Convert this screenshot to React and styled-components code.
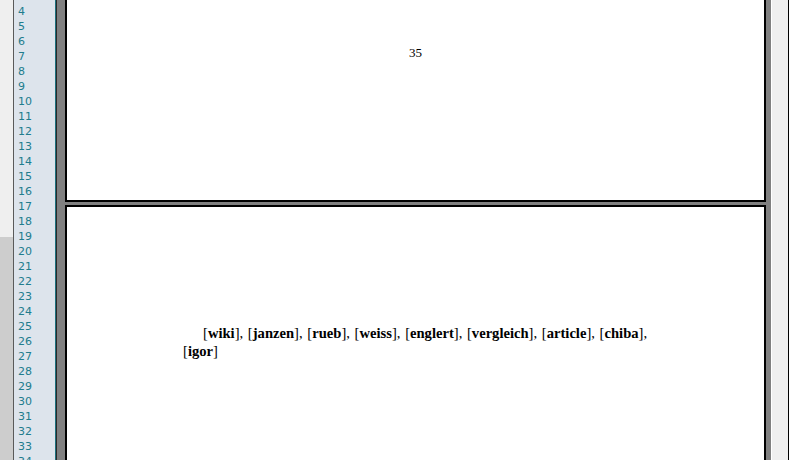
import React from "react";
import styled, { createGlobalStyle } from "styled-components";

const Global = createGlobalStyle`
  html, body {
    margin: 0;
    padding: 0;
    overflow: hidden;
  }
`;

const Window = styled.div`
  display: flex;
  width: 790px;
  height: 460px;
  overflow: hidden;
`;

const LeftStrip = styled.div`
  width: 13px;
  display: flex;
  flex-direction: column;
  background: #efefef;
  border-right: 1px solid #5a5a5a;

  > .track {
    flex: 1;
  }

  > .thumb {
    height: 223px;
    background: #cdcdcd;
  }
`;

const Gutter = styled.div`
  width: 41px;
  background: #dde4ec;
  border-right: 1px solid #1b6f7c;
  box-shadow: 1px 0 0 #2a2a2a;
  margin-right: 1px;
  padding-top: 4px;
  font-family: "DejaVu Sans", sans-serif;
  font-size: 11px;
  color: #217c8d;
`;

const LineNo = styled.div`
  height: 15px;
  line-height: 15px;
  padding-left: 4px;
`;

const Viewer = styled.div`
  width: 715px;
  background: #808080;
  padding: 0 6px 0 8px;
  box-sizing: border-box;
  display: flex;
  flex-direction: column;
  gap: 3px;
  border-right: 1px solid #ffffff;
`;

const Page = styled.div`
  width: 701px;
  box-sizing: border-box;
  background: #ffffff;
  border: 2px solid #000000;
  border-top: ${(p) => (p.cut ? "none" : "2px solid #000000")};
  height: ${(p) => p.h}px;
  flex-shrink: 0;
  font-family: "Liberation Serif", "DejaVu Serif", serif;
  color: #000;
`;

const PageNumber = styled.div`
  padding-top: 45px;
  text-align: center;
  font-size: 13px;
`;

const Body = styled.p`
  margin: 117px 0 0 116px;
  width: 464px;
  font-size: 14.6px;
  line-height: 18px;
  text-align: justify;
  text-indent: 20px;

  b {
    font-weight: bold;
  }
`;

const RightStrip = styled.div`
  width: 16px;
  background: #efefef;
  border-right: 1px solid #000000;
`;

const refs = ["wiki", "janzen", "rueb", "weiss", "englert", "vergleich", "article", "chiba", "igor"];

export default function App() {
  const lines = [];
  for (let i = 4; i <= 34; i++) lines.push(i);
  return (
    <>
      <Global />
      <Window>
        <LeftStrip>
          <div className="track" />
          <div className="thumb" />
        </LeftStrip>
        <Gutter>
          {lines.map((n) => (
            <LineNo key={n}>{n}</LineNo>
          ))}
        </Gutter>
        <Viewer>
          <Page cut h={202}>
            <PageNumber>35</PageNumber>
          </Page>
          <Page h={400}>
            <Body>
              {refs.map((r, i) => (
                <React.Fragment key={r}>
                  [<b>{r}</b>]{i < refs.length - 1 ? ", " : ""}
                </React.Fragment>
              ))}
            </Body>
          </Page>
        </Viewer>
        <RightStrip />
      </Window>
    </>
  );
}
